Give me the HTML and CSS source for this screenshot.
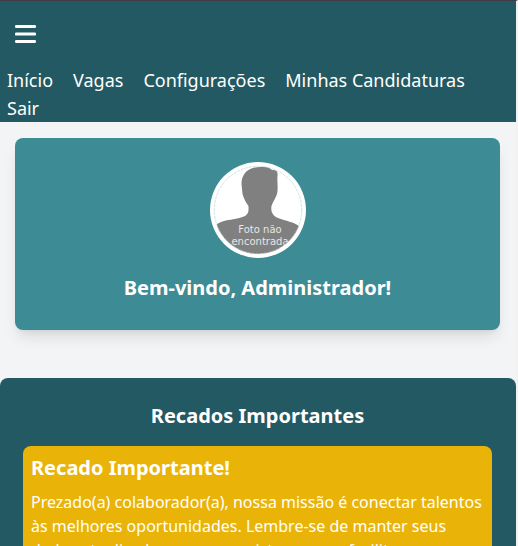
FILE: index.html
```html
<!DOCTYPE html>
<html lang="pt-BR">
<head>
<meta charset="utf-8">
<meta name="viewport" content="width=device-width, initial-scale=1">
<title>Painel</title>
<link rel="stylesheet" href="styles.css">
</head>
<body>
<header class="topbar">
  <button class="menu-toggle" type="button" aria-label="Menu">
    <svg viewBox="0 0 21 24" width="21" height="24" fill="#fff" aria-hidden="true">
      <rect x="0" y="3" width="21" height="3" rx="1.2"/>
      <rect x="0" y="10.4" width="21" height="3.2" rx="1.2"/>
      <rect x="0" y="18" width="21" height="3" rx="1.2"/>
    </svg>
  </button>
  <nav class="nav">
    <a href="#">Início</a>
    <a href="#">Vagas</a>
    <a href="#">Configurações</a>
    <a href="#">Minhas Candidaturas</a>
    <a href="#">Sair</a>
  </nav>
</header>
<main>
  <section class="welcome">
    <svg class="avatar" viewBox="0 0 96 96" role="img" aria-label="Foto não encontrada">
      <defs><clipPath id="photo"><circle cx="48" cy="48" r="44"/></clipPath></defs>
      <circle cx="48" cy="48" r="48" fill="#fff"/>
      <g clip-path="url(#photo)">
        <path fill="#808080" d="M31.500 22C31.500 12 38 5 50 5C56 4 60 6 62 8C67 8 68 10 67.500 14C67 18 68 24 67.500 29C67 35 63 39 61.500 44C60.500 50 63 54 68 56C76 59 84 60 89 64L94 96H4L7 62C14 57 27 58 35 54C39 51 38.500 49 38.500 44C36 41 34 37 32.500 32Z"/>
        <g class="avatar-text">
          <text x="50" y="71" text-anchor="middle">Foto não</text>
          <text x="50" y="83" text-anchor="middle">encontrada</text>
        </g>
      </g>
      <circle cx="48" cy="48" r="43.700" fill="none" stroke="#b7d5d9" stroke-width="0.700" stroke-dasharray="3 1"/>
    </svg>
    <h1>Bem-vindo, Administrador!</h1>
  </section>
  <section class="notices">
    <h2>Recados Importantes</h2>
    <article class="notice">
      <h3>Recado Importante!</h3>
      <p>Prezado(a) colaborador(a), nossa missão é conectar talentos às melhores oportunidades. Lembre-se de manter seus dados atualizados em nosso sistema para facilitar o processo.</p>
    </article>
  </section>
</main>
</body>
</html>
```
FILE: styles.css
```css
* {
  box-sizing: border-box;
  margin: 0;
}

html {
  height: 100%;
  overflow: hidden;
}

body {
  height: 100%;
  overflow: hidden;
  border-top: 1px solid #403d46;
  border-right: 2px solid #f3f2f2;
  background: #f3f4f6;
  color: #fff;
  font-family: "Noto Sans", sans-serif;
  font-size: 16px;
  line-height: 24px;
}

.topbar {
  padding-top: 21px;
  background: #235962;
}

.menu-toggle {
  display: block;
  margin-left: 15px;
  padding: 0;
  border: 0;
  background: none;
}

.menu-toggle svg {
  display: block;
}

.nav {
  display: flex;
  flex-wrap: wrap;
  column-gap: 20px;
  padding: 20px 7px 0;
  font-size: 18px;
  line-height: 28px;
}

.nav a {
  color: #fff;
  text-decoration: none;
}

.welcome {
  display: flex;
  flex-direction: column;
  align-items: center;
  gap: 16px;
  margin: 16px 16px 48px 15px;
  padding: 24px 24px 28px;
  border-radius: 8px;
  background: #3d8c95;
  box-shadow: 0 10px 15px -3px rgb(0 0 0 / 10%), 0 4px 6px -4px rgb(0 0 0 / 10%);
}

.avatar {
  width: 96px;
  height: 96px;
}

.avatar-text {
  fill: #e6e6e6;
  font-family: "DejaVu Sans", sans-serif;
  font-size: 10px;
}

h1,
h2,
h3 {
  font-size: 20px;
  line-height: 28px;
  font-weight: 700;
}

h1,
h2 {
  text-align: center;
}

.notices {
  padding: 24px 24px 24px 23px;
  border-radius: 8px;
  background: #235962;
}

.notice {
  margin-top: 16px;
  padding: 8px;
  border-radius: 8px;
  background: #eab308;
}

.notice p {
  margin-top: 8px;
}
```
